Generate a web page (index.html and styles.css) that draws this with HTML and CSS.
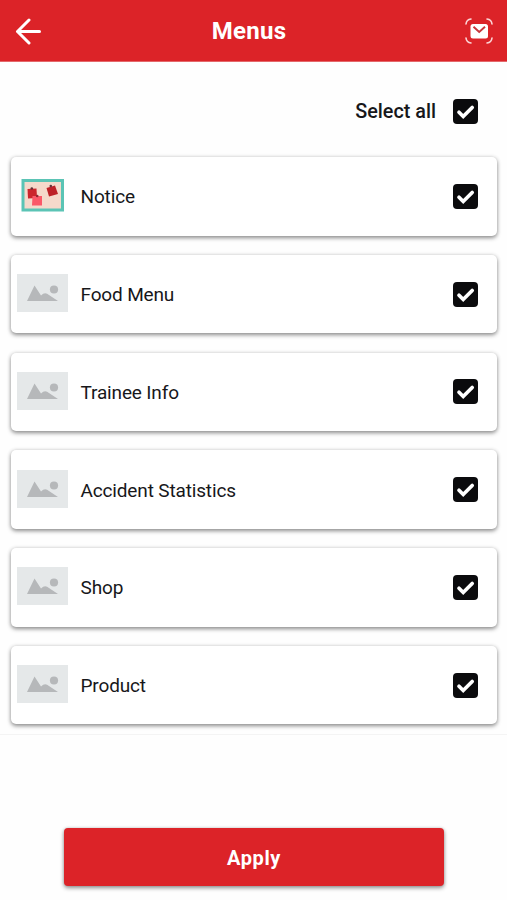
FILE: index.html
```html
<!DOCTYPE html>
<html lang="en">
<head>
<meta charset="utf-8">
<title>Menus</title>
<link rel="stylesheet" href="styles.css">
</head>
<body>
<svg class="defs" width="0" height="0" aria-hidden="true">
  <symbol id="check" viewBox="0 0 25 25">
    <rect width="25" height="25" rx="4" fill="#0b0b0d"/>
    <path d="M6 13.300l4.200 4.200L19.200 8.500" fill="none" stroke="#fff" stroke-width="3.700" stroke-linecap="round" stroke-linejoin="miter"/>
  </symbol>
  <symbol id="placeholder" viewBox="0 0 51 38">
    <rect width="51" height="38" fill="#e5e8e9"/>
    <path d="M10 27L17.5 11.5L24 21.5Q28 17.5 32 21L41 27Z" fill="#b6b8ba"/>
    <circle cx="37" cy="15.5" r="4.1" fill="#b6b8ba"/>
  </symbol>
</svg>
<header class="bar">
  <svg class="back" width="26" height="28" viewBox="0 0 26 28"><path d="M14 3L2.500 14.500L14 26M2.500 14.500H24.500" fill="none" stroke="#fff" stroke-width="3" stroke-linecap="round" stroke-linejoin="round"/></svg>
  <h1 class="title">Menus</h1>
  <svg class="mail" width="28" height="26" viewBox="0 0 28 26">
    <path d="M1 6Q1.5 1.5 6 1M22 1Q26.500 1.500 27 6M27 20Q26.500 24.500 22 25M6 25Q1.500 24.500 1 20" fill="none" stroke="#fbd5d6" stroke-width="1.600" stroke-linecap="round"/>
    <rect x="5.500" y="6" width="17.500" height="14.500" rx="2.500" fill="#fff"/>
    <path d="M8.500 8.700L14.200 14L20 8.700" fill="none" stroke="#c9353a" stroke-width="1.900"/>
  </svg>
</header>
<main class="content">
  <label class="select-all"><span>Select all</span><svg class="check"><use href="#check"/></svg></label>
  <ul class="list">
    <li class="card">
      <svg class="thumb" viewBox="0 0 51 38">
        <rect x="6" y="4.500" width="39.500" height="29.500" fill="#f5d9cb" stroke="#5bc4b5" stroke-width="3"/>
        <path d="M10.500 13L19.500 12.500L20 22L11 22.500Z" fill="#cb252c"/>
        <path d="M29.500 12L38 9.500L41 18L32 20.500Z" fill="#bd2027"/>
        <path d="M15.500 20H25V29.500H15Z" fill="#fb5868"/>
        <circle cx="14.800" cy="12.500" r="1.300" fill="#663238"/>
        <circle cx="33.800" cy="10" r="1.300" fill="#663238"/>
        <circle cx="20.200" cy="20" r="1.300" fill="#8e2632"/>
      </svg>
      <span class="name">Notice</span><svg class="check"><use href="#check"/></svg>
    </li>
    <li class="card"><svg class="thumb"><use href="#placeholder"/></svg><span class="name">Food Menu</span><svg class="check"><use href="#check"/></svg></li>
    <li class="card"><svg class="thumb"><use href="#placeholder"/></svg><span class="name">Trainee Info</span><svg class="check"><use href="#check"/></svg></li>
    <li class="card"><svg class="thumb"><use href="#placeholder"/></svg><span class="name">Accident Statistics</span><svg class="check"><use href="#check"/></svg></li>
    <li class="card"><svg class="thumb"><use href="#placeholder"/></svg><span class="name">Shop</span><svg class="check"><use href="#check"/></svg></li>
    <li class="card"><svg class="thumb"><use href="#placeholder"/></svg><span class="name">Product</span><svg class="check"><use href="#check"/></svg></li>
  </ul>
</main>
<footer class="footer"><button class="apply">Apply</button></footer>
</body>
</html>
```
FILE: styles.css
```css
* { box-sizing: border-box; }

body {
  margin: 0;
  height: 900px;
  overflow: hidden;
  background: #fefefe;
  color: #17171a;
  font-family: Roboto, "Liberation Sans", sans-serif;
}

.defs { position: absolute; }

.bar {
  display: grid;
  grid-template-columns: 42px 1fr 42px;
  align-items: center;
  height: 62px;
  padding: 0 14px 0 15px;
  background: #dc2328;
  border-bottom: 1px solid #e4686b;
  color: #fff;
}

.back { display: block; }

.mail { justify-self: end; margin-top: 1px; }

.title {
  margin: 0;
  padding-right: 10px;
  font-size: 24px;
  font-weight: 700;
  line-height: 28px;
  letter-spacing: 0.3px;
  text-align: center;
}

.content {
  height: 673px;
  border-bottom: 1px solid #f4f4f4;
}

.select-all {
  display: flex;
  align-items: center;
  justify-content: flex-end;
  gap: 17px;
  height: 95px;
  padding: 3px 29px 0 0;
  font-size: 19.8px;
  font-weight: 500;
}

.check {
  display: block;
  flex: none;
  width: 25px;
  height: 25px;
}

.list {
  display: grid;
  gap: 19.25px;
  margin: 0;
  padding: 0 10px 0 11px;
  list-style: none;
}

.card {
  display: flex;
  align-items: center;
  height: 78.5px;
  padding: 0 19px 0 6px;
  border-radius: 5px;
  background: #fff;
  box-shadow: 0 2px 4px rgba(0, 0, 0, 0.42), 0 0 4px rgba(0, 0, 0, 0.12);
}

.thumb {
  flex: none;
  width: 51px;
  height: 38px;
  margin-bottom: 2px;
}

.name {
  flex: 1;
  margin-left: 12.5px;
  padding-top: 2px;
  font-size: 19px;
  line-height: 24px;
  letter-spacing: -0.15px;
}

.footer {
  display: flex;
  justify-content: center;
  padding: 93px 0 0 1px;
}

.apply {
  width: 380px;
  height: 58px;
  padding: 1px 0 0;
  border: 0;
  border-radius: 4px;
  background: #dc2328;
  box-shadow: 0 2px 4px rgba(0, 0, 0, 0.42), 0 0 3px rgba(0, 0, 0, 0.15);
  color: #fff;
  font: 700 20px Roboto, "Liberation Sans", sans-serif;
  letter-spacing: 0.6px;
}
```
